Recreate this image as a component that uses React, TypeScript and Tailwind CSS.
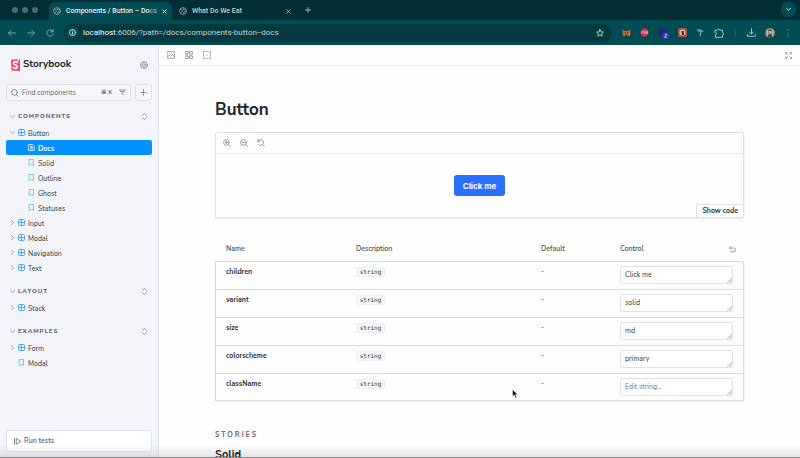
import type { ReactNode } from "react";

type IconProps = { className?: string; children: ReactNode; box?: number; weight?: number };

function Icon({ className = "size-2", children, box = 14, weight = 1 }: IconProps) {
  return (
    <svg
      className={`${className} shrink-0`}
      viewBox={`0 0 ${box} ${box}`}
      fill="none"
      stroke="currentColor"
      strokeWidth={weight}
      strokeLinecap="round"
      strokeLinejoin="round"
      aria-hidden="true"
    >
      {children}
    </svg>
  );
}

const Globe = () => (
  <Icon className="size-2 text-[#8d8f90]" weight={1.6}>
    <circle cx="7" cy="7" r="6" />
    <path d="M2 4l3 1 1 3-2 2M8 1.500l-1 2.500 3 1 2-1M9 12l-1-3 3-1.500 2 1" />
  </Icon>
);

const Component = () => (
  <Icon className="size-[7px] text-[#3aa4f0]" weight={1.8}>
    <rect x="1" y="1" width="12" height="12" rx="2.500" />
    <path d="M7 1v12M1 7h12" />
  </Icon>
);

const Bookmark = () => (
  <Icon className="size-[7px] text-[#45d3de]" weight={1.7}>
    <path d="M3 1h8v12L7 10.500 3 13z" />
  </Icon>
);

const Document = () => (
  <Icon className="size-[7px] text-white" weight={1.5}>
    <path d="M2 1h7l3.500 3.500V13H2zM5 5h3M5 7.500h4.500M5 10h4.500" />
  </Icon>
);

const ChevronDown = () => (
  <Icon className="size-[5px] text-[#73828c]" weight={2}>
    <path d="M1 4l6 6 6-6" />
  </Icon>
);

const ChevronRight = () => (
  <Icon className="size-[5px] text-[#73828c]" weight={2}>
    <path d="M4 1l6 6-6 6" />
  </Icon>
);

function Section({ title, children }: { title: string; children: ReactNode }) {
  return (
    <section className="mb-2">
      <div className="flex h-[17px] items-center justify-between pr-1">
        <button className="flex items-center gap-[3px] pl-1 text-[6px] leading-[9px] font-extrabold tracking-[1px] text-[#5c6570]">
          <ChevronDown />
          {title}
        </button>
        <button aria-label={`Expand ${title}`} className="text-[#73828c]">
          <Icon className="size-[7px]" weight={1.4}>
            <path d="M3 4.500L7 1l4 3.500M3 9.500L7 13l4-3.500" />
          </Icon>
        </button>
      </div>
      <ul>{children}</ul>
    </section>
  );
}

function Group({ label, open = false }: { label: string; open?: boolean }) {
  return (
    <li>
      <a href="#" className="flex h-[15px] items-center gap-[3px] pl-1 text-[7px] leading-[11px] text-[#2e3438]">
        {open ? <ChevronDown /> : <ChevronRight />}
        <Component />
        <span className="pt-px">{label}</span>
      </a>
    </li>
  );
}

function Story({ label, top = false }: { label: string; top?: boolean }) {
  return (
    <li>
      <a
        href="#"
        className={`flex h-[15px] items-center gap-[3px] text-[7px] leading-[11px] text-[#2e3438] ${top ? "pl-3" : "pl-[22px]"}`}
      >
        <Bookmark />
        <span className="pt-px">{label}</span>
      </a>
    </li>
  );
}

function BrowserBar() {
  return (
    <header className="shrink-0 bg-[#002e32] font-[Roboto,sans-serif] text-[#c4d4d5]">
      <div className="flex h-5 items-stretch">
        <div className="flex items-center gap-1 pr-[11px] pl-3">
          <span className="size-[6px] rounded-full bg-[#4f6b6e]" />
          <span className="size-[6px] rounded-full bg-[#4f6b6e]" />
          <span className="size-[6px] rounded-full bg-[#4f6b6e]" />
        </div>
        <div className="mt-[2px] flex w-[123px] items-center gap-[5px] rounded-t-md bg-[#014c52] pr-[7px] pl-1 text-[7px] font-medium text-[#e4eded]">
          <Globe />
          <span className="flex-1 whitespace-nowrap">
            Components / Button – Do<span className="opacity-60">cs</span>
          </span>
          <button aria-label="Close tab">
            <Icon className="size-[5px]" weight={2.4}>
              <path d="M2 2l10 10M12 2L2 12" />
            </Icon>
          </button>
        </div>
        <div className="mt-[2px] flex w-[124px] items-center gap-[5px] pr-[5px] pl-[7px] text-[7px] font-medium">
          <Globe />
          <span className="flex-1 whitespace-nowrap">What Do We Eat</span>
          <button aria-label="Close tab">
            <Icon className="size-[5px]" weight={2}>
              <path d="M2 2l10 10M12 2L2 12" />
            </Icon>
          </button>
        </div>
        <button aria-label="New tab" className="ml-[9px]">
          <Icon className="size-[6px]" weight={1.8}>
            <path d="M7 1v12M1 7h12" />
          </Icon>
        </button>
        <button
          aria-label="Search tabs"
          className="mt-[2px] mr-1 ml-auto flex size-[15px] items-center justify-center rounded-md bg-[#014c52] text-white"
        >
          <Icon className="size-[5px]" weight={2.6}>
            <path d="M2 4l5 5 5-5" />
          </Icon>
        </button>
      </div>
      <div className="flex h-[25px] items-center bg-[#014c52] pr-2 pl-2 text-[#8fb0b2]">
        <div className="flex w-14 items-center gap-[11px]">
          <button aria-label="Back">
            <Icon className="size-2" weight={1.5}>
              <path d="M13 7H1M6 2L1 7l5 5" />
            </Icon>
          </button>
          <button aria-label="Forward">
            <Icon className="size-2" weight={1.5}>
              <path d="M1 7h12M8 2l5 5-5 5" />
            </Icon>
          </button>
          <button aria-label="Reload">
            <Icon className="size-2" weight={1.5}>
              <path d="M12 4.500A5.500 5.500 0 1 0 12.500 8M12.500 1v4H8.500" />
            </Icon>
          </button>
        </div>
        <div className="flex h-[18px] flex-1 items-center gap-1 rounded-full bg-[#023a3f] pr-2 pl-[2px]">
          <span className="flex size-[13px] items-center justify-center rounded-full bg-[#014c52] text-white">
            <Icon className="size-[7px]" weight={1.6}>
              <circle cx="7" cy="7" r="6" />
              <path d="M7 6.500V10M7 4v.1" />
            </Icon>
          </span>
          <p className="flex-1 text-[8px] text-[#c4d4d5]">
            <span className="text-white">localhost</span>:6006/?path=/docs/components-button--docs
          </p>
          <button aria-label="Bookmark page" className="text-[#dbe7e8]">
            <Icon className="size-2" weight={1.4}>
              <path d="M7 1l1.800 4 4.200.4-3.200 2.800 1 4.300L7 10.200l-3.800 2.300 1-4.300L1 5.400 5.200 5z" />
            </Icon>
          </button>
        </div>
        <div className="flex items-center gap-[9px] pl-[10px]">
          <svg className="h-[8px] w-[9px]" viewBox="0 0 18 16" aria-hidden="true">
            <path d="M1 1l5 3h6l5-3v9l-2 5-4-1H7l-4 1-2-5z" fill="#bd6a35" />
            <path d="M6 7h2v2H6zM10 7h2v2h-2zM7 12h4v2H7z" fill="#3f2617" />
          </svg>
          <svg className="h-[9px] w-[9px]" viewBox="0 0 18 18" aria-hidden="true">
            <path d="M6 1h6l5 5v6l-5 5H6l-5-5V6z" fill="#d3364c" />
            <path d="M3 11l2-5 2 5M8.500 6v5h2V6.500M13 6v5h2V6.500" stroke="#f0aab4" fill="none" strokeWidth="1.500" />
          </svg>
          <svg className="-mb-[2px] h-[11px] w-[11px]" viewBox="0 0 22 22" aria-hidden="true">
            <circle cx="8" cy="8" r="8" fill="#1c2380" />
            <rect x="9" y="9" width="13" height="13" rx="4" fill="#3d3ab0" />
            <path d="M14 12h3v3l-3 1v3h3" stroke="#d8d8ff" fill="none" strokeWidth="1.500" />
          </svg>
          <svg className="size-[9px]" viewBox="0 0 18 18" aria-hidden="true">
            <rect width="18" height="18" rx="3" fill="#a85548" />
            <circle cx="9" cy="9" r="6" fill="#d9bdb2" />
            <path d="M7 6h5v8H8z" fill="#532820" />
          </svg>
          <svg className="size-[9px]" viewBox="0 0 18 18" aria-hidden="true">
            <path d="M1 2l9 1 7 4-6 1-1 8-3 1 1-8-4-2z" fill="#4fa985" />
          </svg>
          <Icon className="size-[10px] text-[#a9c3c5]" weight={1.4}>
            <path d="M2 3h3a1.500 1.500 0 0 1 3 0h4v3.500a1.500 1.500 0 0 1 0 3V13H2V9.500a1.500 1.500 0 0 0 0-3z" />
          </Icon>
          <span className="mx-[2px] h-[8px] w-px bg-[#28666b]" />
          <Icon className="size-[9px] text-[#a9c3c5]" weight={1.5}>
            <path d="M7 1v8M3.500 6L7 9l3.500-3M1 10v3h12v-3" />
          </Icon>
          <svg className="size-[10px]" viewBox="0 0 20 20" aria-hidden="true">
            <circle cx="10" cy="10" r="10" fill="#7f8a78" />
            <path d="M3 4h3v12H3zM14 4h3v12h-3z" fill="#b9b09a" />
            <circle cx="10" cy="8" r="3" fill="#d6b29a" />
            <path d="M6 19c0-6 2-7 4-7s4 1 4 7z" fill="#39433f" />
            <path d="M7 7c0-5 6-5 6 0l-2-1H8z" fill="#49382c" />
          </svg>
          <Icon className="size-2" weight={2}>
            <path d="M7 2v.1M7 7v.1M7 12v.1" />
          </Icon>
        </div>
      </div>
    </header>
  );
}

function Sidebar() {
  return (
    <aside className="flex w-[159px] shrink-0 flex-col border-r border-[#e3e6ec] bg-[#f2f4fa] px-[6px] pb-[6px]">
      <div className="flex h-[39px] items-center justify-between pr-1 pl-[5px]">
        <a href="#" className="flex items-center gap-[3px] text-[10px] font-bold text-[#1f2327]">
          <svg className="h-[12px] w-[9px]" viewBox="0 0 18 24" aria-hidden="true">
            <path d="M0 1.500L18 0v24L1 23z" fill="#f8405f" />
            <path
              d="M13 8.500c0-4.500-8-4.500-8 0 0 4.500 8 2.500 8 7 0 4.500-8.500 4-8.500 0"
              stroke="#fff"
              strokeWidth="3.400"
              fill="none"
            />
            <path d="M13 0h3v4.500l-1.500-1-1.500 1z" fill="#fff" />
          </svg>
          Storybook
        </a>
        <button aria-label="Settings" className="text-[#73828c]">
          <Icon className="size-2" weight={1.2}>
            <circle cx="7" cy="7" r="6" />
            <circle cx="7" cy="7" r="2.500" />
            <path d="M7 1v1.500M7 11.500V13M1 7h1.500M11.500 7H13M2.800 2.800l1 1M10.200 10.200l1 1M11.200 2.800l-1 1M3.800 10.200l-1 1" />
          </Icon>
        </button>
      </div>
      <div className="flex gap-1">
        <div className="flex h-[17px] flex-1 items-center gap-[3px] rounded-[3px] border border-[#dde1e8] bg-[#f6f7fb] px-1 text-[#5c6870]">
          <Icon className="size-2" weight={1.3}>
            <circle cx="6" cy="6" r="5" />
            <path d="M9.800 9.800L13 13" />
          </Icon>
          <input
            aria-label="Find components"
            placeholder="Find components"
            className="w-0 flex-1 bg-transparent text-[7px] leading-[11px] outline-none placeholder:text-[#5c6870]"
          />
          <kbd className="font-['Open_Sans','DejaVu_Sans',sans-serif] text-[6px] leading-[9px] font-semibold">⌘ K</kbd>
          <button aria-label="Filter" className="ml-1">
            <Icon className="size-[7px]" weight={1.3}>
              <path d="M1 2h12M3 5h8M5 8h4M6.500 11h1" />
            </Icon>
          </button>
        </div>
        <button
          aria-label="Create story"
          className="flex size-[17px] items-center justify-center rounded-[3px] border border-[#dde1e8] bg-[#f6f7fb] text-[#5c6870]"
        >
          <Icon className="size-[7px]" weight={1.3}>
            <path d="M7 1v12M1 7h12" />
          </Icon>
        </button>
      </div>
      <nav className="flex-1 pt-[7px]">
        <Section title="COMPONENTS">
          <Group label="Button" open />
          <li>
            <a
              href="#"
              aria-current="page"
              className="flex h-[15px] items-center gap-[3px] rounded-[2px] bg-[#0590ff] pl-[22px] text-[7px] leading-[11px] font-bold text-white"
            >
              <Document />
              <span className="pt-px">Docs</span>
            </a>
          </li>
          <Story label="Solid" />
          <Story label="Outline" />
          <Story label="Ghost" />
          <Story label="Statuses" />
          <Group label="Input" />
          <Group label="Modal" />
          <Group label="Navigation" />
          <Group label="Text" />
        </Section>
        <Section title="LAYOUT">
          <Group label="Stack" />
        </Section>
        <Section title="EXAMPLES">
          <Group label="Form" />
          <Story label="Modal" top />
        </Section>
      </nav>
      <button className="flex h-[22px] items-center gap-[3px] rounded-[3px] border border-[#e1e4ea] bg-white px-[7px] text-[7px] font-semibold text-[#5c6870]">
        <Icon className="size-[7px]" weight={1.5}>
          <path d="M1 1v12M4.500 1.500v11L13 7z" />
        </Icon>
        Run tests
      </button>
    </aside>
  );
}

const rows = [
  { name: "children", value: "Click me" },
  { name: "variant", value: "solid" },
  { name: "size", value: "md" },
  { name: "colorscheme", value: "primary" },
  { name: "className", value: "" },
];

function PropsTable() {
  return (
    <table className="mt-5 w-full table-fixed border-separate border-spacing-0 text-left text-[7px] text-[#2e3438]">
      <thead>
        <tr className="h-[23px] text-[#4b5359]">
          <th className="w-[130px] pl-[11px] font-semibold">Name</th>
          <th className="pl-[11px] font-semibold">Description</th>
          <th className="w-[79px] font-semibold">Default</th>
          <th className="w-[124px] pr-2 font-semibold">
            <span className="flex items-center justify-between">
              Control
              <button aria-label="Reset controls" className="text-[#73828c]">
                <Icon className="size-[7px]" weight={1.4}>
                  <path d="M4 1L1 4l3 3M1 4h8.500a3.500 3.500 0 0 1 0 7.500H3" />
                </Icon>
              </button>
            </span>
          </th>
        </tr>
      </thead>
      <tbody className="shadow-[0_1px_2px_rgba(0,0,0,0.08)]">
        {rows.map((row) => (
          <tr key={row.name} className="h-7 align-top">
            <td className="border-t border-l border-[#dcdcdc] pt-[5px] pl-[10px] font-bold in-[tr:last-child]:border-b">
              {row.name}
            </td>
            <td className="border-t border-[#dcdcdc] pt-[5px] pl-[11px] in-[tr:last-child]:border-b">
              <code className="block w-[29px] rounded-[2px] border border-[#edf1f4] bg-[#f5f8fa] text-center font-['DejaVu_Sans_Mono',monospace] text-[6px] leading-2">
                string
              </code>
            </td>
            <td className="border-t border-[#dcdcdc] pt-[5px] in-[tr:last-child]:border-b">-</td>
            <td className="border-t border-r border-[#dcdcdc] pt-1 pr-[10px] in-[tr:last-child]:border-b">
              <textarea
                aria-label={row.name}
                rows={1}
                defaultValue={row.value}
                placeholder="Edit string..."
                className="block h-[18px] w-full resize-none overflow-hidden rounded-[2px] border border-[#e0e2e4] bg-white px-1 py-[3px] text-[7px] leading-[10px] outline-none placeholder:text-[#73777b]"
              />
              <Icon className="-mt-[6px] mr-px ml-auto size-[5px] text-[#73777b]" weight={1.6}>
                <path d="M1 13L13 1M7 13l6-6" />
              </Icon>
            </td>
          </tr>
        ))}
      </tbody>
    </table>
  );
}

function Canvas() {
  return (
    <main className="flex min-w-0 flex-1 flex-col bg-[#fdfdfd]">
      <div className="flex h-[21px] shrink-0 items-center gap-[10px] border-b border-[#e6e8ea] px-2 text-[#73828c]">
        <button aria-label="Background">
          <Icon className="size-2" weight={1.2}>
            <rect x="1" y="1" width="12" height="12" />
            <path d="M1 10l3-3 2.500 2.500L9.500 6 13 10M4.500 4v.5" />
          </Icon>
        </button>
        <button aria-label="Grid">
          <Icon className="size-2" weight={1.3}>
            <path d="M1 1h4.500v4.500H1zM8.500 1H13v4.500H8.500zM1 8.500h4.500V13H1zM8.500 8.500H13V13H8.500z" />
          </Icon>
        </button>
        <button aria-label="Outline">
          <Icon className="size-2" weight={1.2}>
            <path d="M1 3.500V1h2.500M6 1h2M10.500 1H13v2.500M13 6v2M13 10.500V13h-2.500M8 13H6M3.500 13H1v-2.500M1 8V6M6.500 7h1" />
          </Icon>
        </button>
        <button aria-label="Full screen" className="ml-auto">
          <Icon className="size-[7px]" weight={1.2}>
            <path d="M1 4V1h3M10 1h3v3M13 10v3h-3M4 13H1v-3M1 1l4 4M13 1L9 5M13 13L9 9M1 13l4-4" />
          </Icon>
        </button>
      </div>
      <div className="min-h-0 flex-1 overflow-hidden px-14 pt-8">
        <article className="mx-auto max-w-[1000px]">
          <h1 className="text-[17px] leading-6 font-bold text-[#23272b]">Button</h1>
          <div className="mt-[10px] rounded-[2px] border border-[#e0e2e4] shadow-[0_1px_2px_rgba(0,0,0,0.08)]">
            <div className="flex h-[21px] items-center gap-[9px] border-b border-[#e6e8ea] px-[7px] text-[#73828c]">
              <button aria-label="Zoom in">
                <Icon className="size-2" weight={1.3}>
                  <circle cx="6" cy="6" r="5" />
                  <path d="M9.800 9.800L13 13M6 4v4M4 6h4" />
                </Icon>
              </button>
              <button aria-label="Zoom out">
                <Icon className="size-2" weight={1.3}>
                  <circle cx="6" cy="6" r="5" />
                  <path d="M9.800 9.800L13 13M4 6h4" />
                </Icon>
              </button>
              <button aria-label="Reset zoom">
                <Icon className="size-2" weight={1.3}>
                  <path d="M1.500 1v3.500H5M1.700 4.300A5 5 0 1 1 3 10M9.800 9.800L13 13" />
                </Icon>
              </button>
            </div>
            <div className="grid h-[63px] grid-cols-1 grid-rows-1">
              <button className="col-start-1 row-start-1 h-[21px] place-self-center rounded-[3px] bg-[#2970ff] px-[9px] font-[Inter,sans-serif] text-[8px] font-bold text-white">
                Click me
              </button>
              <button className="col-start-1 row-start-1 h-[13px] place-self-end rounded-tl-[2px] border-t border-l border-[#e0e2e4] px-[5px] text-[7px] font-bold text-[#2e3438]">
                Show code
              </button>
            </div>
          </div>
          <PropsTable />
          <h2 className="mt-7 text-[7px] leading-3 font-bold tracking-[2px] text-[#5c6570]">STORIES</h2>
          <h3 className="mt-[9px] text-[11px] leading-[10px] font-bold text-[#23272b]">Solid</h3>
        </article>
      </div>
    </main>
  );
}

export default function App() {
  return (
    <div className="relative flex h-screen flex-col overflow-hidden font-['Nunito_Sans','Open_Sans',sans-serif]">
      <BrowserBar />
      <div className="flex min-h-0 flex-1">
        <Sidebar />
        <Canvas />
      </div>
      <div className="pointer-events-none absolute inset-x-0 bottom-0 h-3 border-b border-[#8b8d8e] bg-linear-to-b from-transparent to-black/10" />
      <svg className="pointer-events-none absolute top-[389px] left-[512px] h-[10px] w-[6px]" viewBox="0 0 12 20" aria-hidden="true">
        <path d="M1 1v14l3.500-3 2.500 6 2.500-1-2.500-6H11.500z" fill="#111" stroke="#fff" strokeWidth="1" />
      </svg>
    </div>
  );
}
